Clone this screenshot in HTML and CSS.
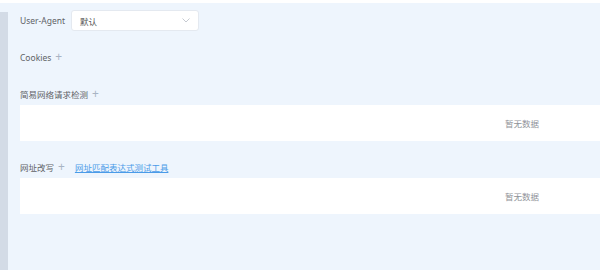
FILE: index.html
```html
<!DOCTYPE html>
<html lang="zh-CN">
<head>
    <meta charset="UTF-8">
    <title>请求设置</title>
    <link rel="stylesheet" href="styles.css">
</head>
<body>
<div class="page">
    <div class="rail"></div>
    <div class="content">
        <div class="row ua">
            <span class="label">User-Agent</span>
            <div class="select">
                <span>默认</span>
                <svg class="arrow" width="8" height="5" viewBox="0 0 8 5"><path d="M0.5 0.5 L4 4 L7.5 0.5" fill="none" stroke="#c0c4cc" stroke-width="0.9"/></svg>
            </div>
        </div>

        <div class="row title cookies">
            <span>Cookies</span><span class="plus">+</span>
        </div>

        <div class="row title net">
            <span>简易网络请求检测</span><span class="plus">+</span>
        </div>
        <div class="table">
            <span class="empty">暂无数据</span>
        </div>

        <div class="row title rewrite">
            <span>网址改写</span><span class="plus">+</span>
            <a class="link" href="#">网址匹配表达式测试工具</a>
        </div>
        <div class="table">
            <span class="empty">暂无数据</span>
        </div>
    </div>
</div>
</body>
</html>
```

FILE: styles.css
```css
*{
    margin: 0;
    padding: 0;
    box-sizing: border-box;
}
html,body{
    width: 600px;
    height: 270px;
    overflow: hidden;
    background: #fff;
}
body{
    font-family: "Noto Sans", "Noto Sans CJK SC", sans-serif;
    font-size: 8.5px;
    color: #606266;
}
.page{
    display: flex;
    height: 267px;
    margin-top: 3px;
    background: #eef5fd;
}
.rail{
    width: 8px;
    flex: none;
    margin-top: 9px;
    background: #d3dbe6;
}
.content{
    flex: 1;
    padding: 7px 0 0 12px;
    min-width: 0;
}
.row{
    display: flex;
    align-items: center;
}
.ua{
    height: 21px;
}
.label{
    width: 51px;
}
.select{
    width: 128px;
    height: 21px;
    background: #fff;
    border: 1px solid #e4e9f0;
    border-radius: 3px;
    display: flex;
    align-items: center;
    justify-content: space-between;
    padding: 0 8px 0 8px;
    color: #555;
}
.title{
    height: 14px;
}
.plus{
    color: #a8b4c4;
    font-size: 12px;
    margin-left: 4px;
    line-height: 1;
}
.cookies{
    margin-top: 19px;
}
.net{
    margin-top: 23px;
}
.rewrite{
    margin-top: 19px;
}
.link{
    margin-left: 10px;
    color: #4a9be8;
    text-decoration: underline;
}
.table{
    height: 36px;
    margin-top: 4px;
    padding-left: 424px;
    background: #fff;
    display: flex;
    align-items: center;
    justify-content: center;
}
.empty{
    color: #909399;
}
```
